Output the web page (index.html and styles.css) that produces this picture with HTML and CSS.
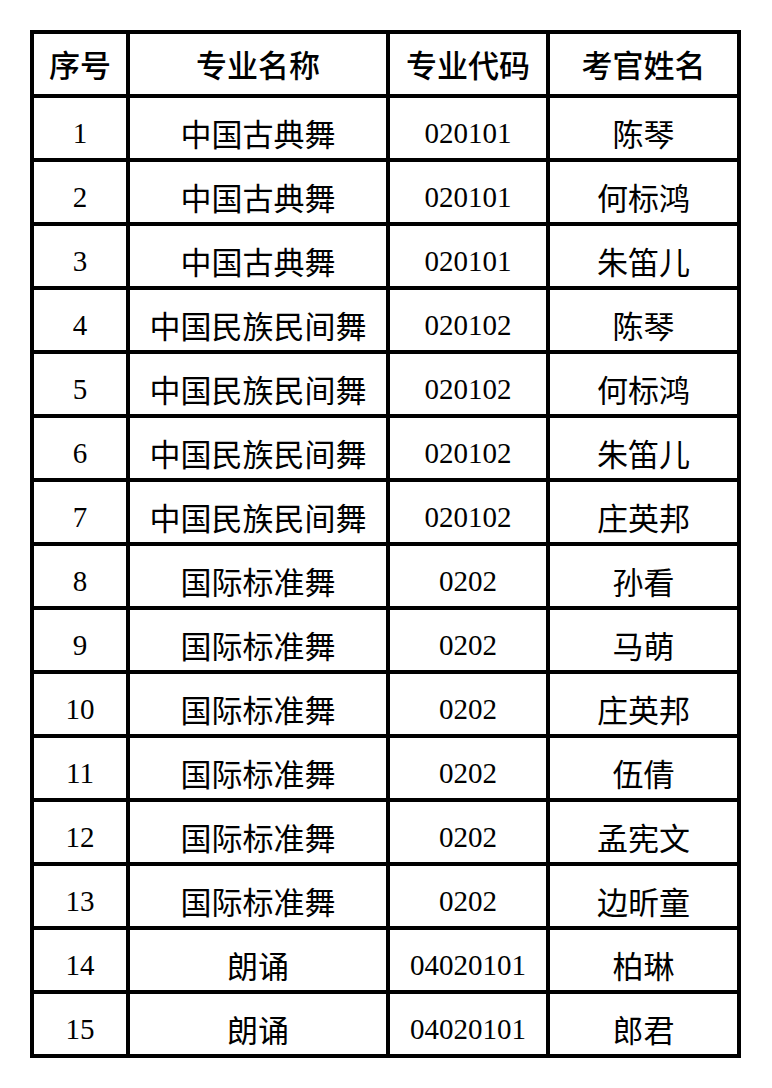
FILE: index.html
```html
<!DOCTYPE html>
<html lang="zh-CN">
<head>
<meta charset="utf-8">
<title>考官名单</title>
<link rel="stylesheet" href="styles.css">
</head>
<body>
<table class="grid">
  <colgroup>
    <col class="c-no">
    <col class="c-major">
    <col class="c-code">
    <col class="c-name">
  </colgroup>
  <thead>
    <tr><th>序号</th><th>专业名称</th><th>专业代码</th><th>考官姓名</th></tr>
  </thead>
  <tbody>
    <tr><td class="num">1</td><td class="cjk">中国古典舞</td><td class="num">020101</td><td class="cjk">陈琴</td></tr>
    <tr><td class="num">2</td><td class="cjk">中国古典舞</td><td class="num">020101</td><td class="cjk">何标鸿</td></tr>
    <tr><td class="num">3</td><td class="cjk">中国古典舞</td><td class="num">020101</td><td class="cjk">朱笛儿</td></tr>
    <tr><td class="num">4</td><td class="cjk">中国民族民间舞</td><td class="num">020102</td><td class="cjk">陈琴</td></tr>
    <tr><td class="num">5</td><td class="cjk">中国民族民间舞</td><td class="num">020102</td><td class="cjk">何标鸿</td></tr>
    <tr><td class="num">6</td><td class="cjk">中国民族民间舞</td><td class="num">020102</td><td class="cjk">朱笛儿</td></tr>
    <tr><td class="num">7</td><td class="cjk">中国民族民间舞</td><td class="num">020102</td><td class="cjk">庄英邦</td></tr>
    <tr><td class="num">8</td><td class="cjk">国际标准舞</td><td class="num">0202</td><td class="cjk">孙看</td></tr>
    <tr><td class="num">9</td><td class="cjk">国际标准舞</td><td class="num">0202</td><td class="cjk">马萌</td></tr>
    <tr><td class="num">10</td><td class="cjk">国际标准舞</td><td class="num">0202</td><td class="cjk">庄英邦</td></tr>
    <tr><td class="num">11</td><td class="cjk">国际标准舞</td><td class="num">0202</td><td class="cjk">伍倩</td></tr>
    <tr><td class="num">12</td><td class="cjk">国际标准舞</td><td class="num">0202</td><td class="cjk">孟宪文</td></tr>
    <tr><td class="num">13</td><td class="cjk">国际标准舞</td><td class="num">0202</td><td class="cjk">边昕童</td></tr>
    <tr><td class="num">14</td><td class="cjk">朗诵</td><td class="num">04020101</td><td class="cjk">柏琳</td></tr>
    <tr><td class="num">15</td><td class="cjk">朗诵</td><td class="num">04020101</td><td class="cjk">郎君</td></tr>
  </tbody>
</table>
</body>
</html>
```
FILE: styles.css
```css
html, body {
  margin: 0;
  padding: 0;
  background: #ffffff;
}
body {
  padding: 30px 0 0 30px;
  font-family: "Liberation Serif", "Noto Sans CJK SC", serif;
  color: #000;
}
.grid {
  table-layout: fixed;
  width: 711px;
  border-collapse: separate;
  border-spacing: 4px;
  background: #000;
}
.c-no { width: 92px; }
.c-major { width: 256px; }
.c-code { width: 156px; }
.c-name { width: 187px; }
.grid th, .grid td {
  background: #fff;
  height: 60px;
  padding: 0;
  text-align: center;
  vertical-align: middle;
  white-space: nowrap;
  overflow: hidden;
}
.grid th {
  font-family: "Noto Sans CJK SC", sans-serif;
  font-size: 31px;
  font-weight: 500;
  line-height: 60px;
}
.grid td {
  box-sizing: border-box;
  padding-top: 10px;
  line-height: 50px;
}
.grid td.cjk {
  font-family: "Noto Sans CJK SC", sans-serif;
  font-size: 31px;
  font-weight: 400;
}
.grid td.num {
  font-family: "Liberation Serif", serif;
  font-size: 29px;
}
```
